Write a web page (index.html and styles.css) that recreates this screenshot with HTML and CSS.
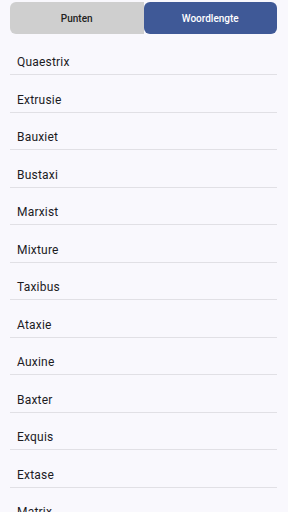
FILE: index.html
```html
<!DOCTYPE html>
<html lang="nl">

<head>
  <meta charset="UTF-8">
  <meta name="viewport" content="width=device-width, initial-scale=1.0">
  <title>Woorden</title>
  <link rel="stylesheet" href="styles.css">
</head>

<body>
  <div class="tabs">
    <div class="tab">Punten</div>
    <div class="tab on">Woordlengte</div>
  </div>
  <ul class="words">
    <li>Quaestrix</li>
    <li>Extrusie</li>
    <li>Bauxiet</li>
    <li>Bustaxi</li>
    <li>Marxist</li>
    <li>Mixture</li>
    <li>Taxibus</li>
    <li>Ataxie</li>
    <li>Auxine</li>
    <li>Baxter</li>
    <li>Exquis</li>
    <li>Extase</li>
    <li>Matrix</li>
  </ul>
</body>

</html>
```

FILE: styles.css
```css
* {
  margin: 0;
  padding: 0;
}

ul,
li {
  list-style: none;
}

body {
  background-color: #f9f8fd;
  font-family: Roboto, "Liberation Sans", sans-serif;
  color: #1c1b1f;
  overflow: hidden;
  height: 512px;
}

.tabs {
  display: flex;
  height: 32px;
  margin: 2px 11px 0 10px;
}

.tab {
  flex: 1;
  display: flex;
  align-items: center;
  justify-content: center;
  font-size: 10px;
  font-weight: 500;
  color: #222;
  background-color: #cfcfcf;
  border-radius: 6px 0 0 6px;
}

.tab.on {
  background-color: #3f5997;
  color: #fff;
  border-radius: 6px;
}

.words {
  margin: 3.5px 11px 0 10px;
}

.words li {
  box-sizing: border-box;
  height: 37.5px;
  padding: 16.5px 0 0 7px;
  font-size: 12px;
  line-height: 16px;
  letter-spacing: 0.2px;
  border-bottom: 1px solid #e1e0e5;
}
```
